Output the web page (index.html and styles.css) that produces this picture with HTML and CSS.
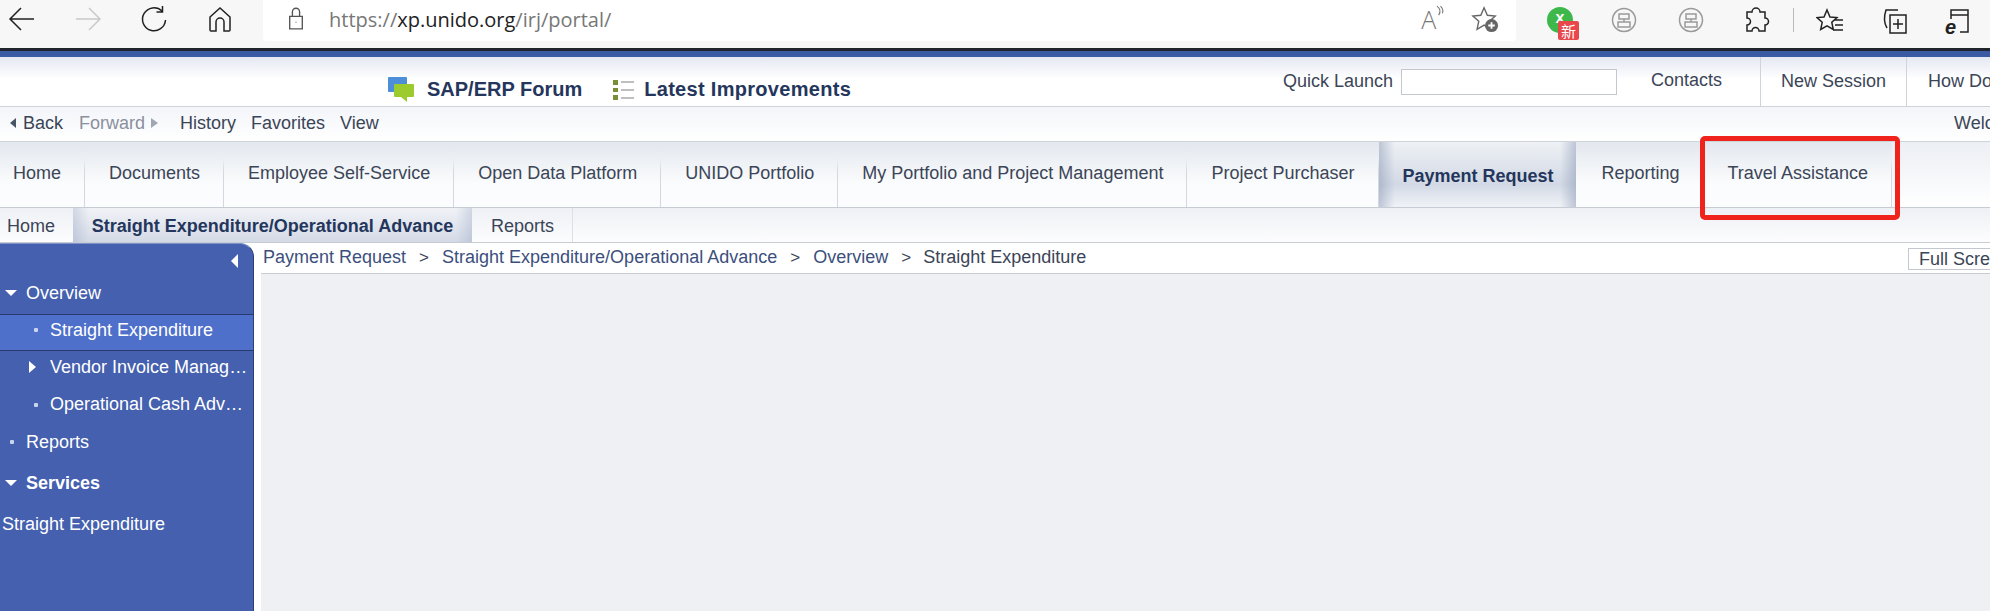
FILE: index.html
```html
<!DOCTYPE html>
<html>
<head>
    <title>Payment Request</title>
    <link rel="stylesheet" href="styles.css">
</head>
<body>
    <div class="browser">
        <div class="nav-icons">
            <svg class="tool" viewBox="0 0 28 28"><path d="M26 14H2M13 3 2 14l11 11"/></svg>
            <svg class="tool faded" viewBox="0 0 28 28"><path d="M2 14h24M15 3l11 11-11 11"/></svg>
            <svg class="tool" viewBox="0 0 28 28"><path d="M22 6A11.500 11.500 0 1 0 25.500 15M22.500 1v6h-6"/></svg>
            <svg class="tool" viewBox="0 0 28 28"><path d="M4 12 14 3l10 9v13a1 1 0 0 1-1 1h-5v-9a4 4 0 0 0-8 0v9H5a1 1 0 0 1-1-1z"/></svg>
        </div>
        <div class="address">
            <svg class="lock" viewBox="0 0 20 26"><path d="M3 10h14v14H3zM6 10V5a4 4 0 0 1 8 0v5M10 16v1"/></svg>
            <span class="url">https://<b>xp.unido.org</b>/irj/portal/</span>
            <span class="read">A<svg viewBox="0 0 10 14"><path d="M1 1c4 3 4 7 2 10M5 1c3 3 3 6 2 8"/></svg></span>
            <svg class="tool star" viewBox="0 0 30 30"><path d="M14 3l3.500 8 8.500.8-6.300 5.700 1.800 8.400L14 21.500 6.500 26l1.800-8.500L2 11.800l8.500-.8z"/><circle cx="22" cy="22" r="7" class="gray-dot"/><path class="plus" d="M22 18.500v7M18.500 22h7"/></svg>
        </div>
        <div class="ext-icons">
            <span class="ext-x">x<span class="ext-badge">新</span></span>
            <svg class="ext-round" viewBox="0 0 26 26"><circle cx="13" cy="13" r="11.500"/><path d="M8 7h10v5H8zM7 15h12v5H7zM13 12v3"/></svg>
            <svg class="ext-round" viewBox="0 0 26 26"><circle cx="13" cy="13" r="11.500"/><path d="M8 7h10v5H8zM7 15h12v5H7zM13 12v3"/></svg>
            <svg class="tool puzzle" viewBox="0 0 28 28"><path d="M10 5a4 4 0 0 1 8 0h5v6a3.500 3.500 0 0 1 0 7v6h-6a3.500 3.500 0 0 0-7 0H5v-6a3.500 3.500 0 0 0 0-7V5z"/></svg>
            <span class="tool-divider"></span>
            <svg class="tool fav" viewBox="0 0 28 28"><path d="M11 3l3 7 7 .6-5.200 4.700 1.500 7.200L11 18.800l-6.300 3.700 1.500-7.200L1 10.600 8 10zM18 13h9M19 18h8M17 23h10"/></svg>
            <svg class="tool coll" viewBox="0 0 28 28"><path d="M6 21C3 16 3 9 5 3h12M9 8h16v18H9zM17 12v10M12 17h10"/></svg>
            <span class="ie"><svg class="tool" viewBox="0 0 28 28"><path d="M6 12V3h17v22H15M6 8h17"/></svg><i>e</i></span>
        </div>
    </div>
    <div class="top-rule"></div>

    <div class="portal-header">
        <div class="forum">
            <svg class="chat" viewBox="0 0 26 25"><rect x="0" y="0" width="19" height="15" rx="1" fill="#4c8fd8"/><rect x="6" y="7" width="20" height="13" rx="1" fill="#9ccb2d"/><path d="M13 20h6v5z" fill="#9ccb2d"/></svg>
            <span class="forum-link">SAP/ERP Forum</span>
            <svg class="list" viewBox="0 0 21 22"><path class="list-dot" d="M0 1h5v5H0zM0 9h5v4H0zM0 16h5v5H0z"/><path class="list-line" d="M8 3h13M8 11h13M8 19h13"/></svg>
            <span class="forum-link latest">Latest Improvements</span>
        </div>
        <div class="quick">
            <label>Quick Launch</label>
            <input type="text" class="quick-input">
        </div>
        <a class="head-link contacts">Contacts</a>
        <a class="head-link session">New Session</a>
        <a class="head-link how">How Do</a>
    </div>

    <div class="history-bar">
        <span class="arrow-left"></span><span class="back">Back</span>
        <span class="forward">Forward</span><span class="arrow-right"></span>
        <span class="hist first">History</span>
        <span class="hist">Favorites</span>
        <span class="hist">View</span>
        <span class="welcome">Welc</span>
    </div>

    <div class="tabs">
        <div class="tab tab-first">Home</div>
        <div class="tab">Documents</div>
        <div class="tab">Employee Self-Service</div>
        <div class="tab">Open Data Platform</div>
        <div class="tab">UNIDO Portfolio</div>
        <div class="tab">My Portfolio and Project Management</div>
        <div class="tab tab-last">Project Purchaser</div>
        <div class="tab-active">Payment Request</div>
        <div class="tab tab-reporting">Reporting</div>
        <div class="tab tab-travel">Travel Assistance</div>
        <div class="highlight"></div>
    </div>

    <div class="subtabs">
        <div class="subtab sub-home">Home</div>
        <div class="subtab sub-active">Straight Expenditure/Operational Advance</div>
        <div class="subtab sub-reports">Reports</div>
    </div>

    <div class="main">
        <div class="sidebar">
            <div class="collapse"><span class="collapse-arrow"></span></div>
            <div class="item"><span class="tri-down"></span>Overview</div>
            <div class="item sub selected"><span class="dot"></span>Straight Expenditure</div>
            <div class="item sub"><span class="tri-right"></span><span class="clip">Vendor Invoice Management</span></div>
            <div class="item sub item-tight"><span class="dot"></span><span class="clip">Operational Cash Advance Request</span></div>
            <div class="item"><span class="dot"></span>Reports</div>
            <div class="item services"><span class="tri-down"></span>Services</div>
            <div class="service-link">Straight Expenditure</div>
        </div>
        <div class="content">
            <div class="crumbs">
                <a>Payment Request</a><span class="sep">&gt;</span>
                <a>Straight Expenditure/Operational Advance</a><span class="sep">&gt;</span>
                <a>Overview</a><span class="sep">&gt;</span>
                <span class="current">Straight Expenditure</span>
                <span class="full-screen">Full Screen</span>
            </div>
            <div class="page-area"></div>
        </div>
    </div>
</body>
</html>
```

FILE: styles.css
```css
body {
    margin: 0;
    width: 1990px;
    height: 611px;
    overflow: hidden;
    font-family: "Liberation Sans", Arial, sans-serif;
    font-size: 18px;
    color: #3b4557;
    background: #fff;
}
svg {
    display: block;
}

/* browser chrome */
.browser {
    display: flex;
    height: 48px;
    background: #f7f7f7;
    box-sizing: border-box;
}
.nav-icons {
    display: flex;
    gap: 38px;
    width: 263px;
    padding: 5px 0 0 8px;
    box-sizing: border-box;
}
.tool {
    width: 28px;
    height: 28px;
    flex: none;
    fill: none;
    stroke: #222;
    stroke-width: 1.500;
}
.faded {
    stroke: #c9c9c9;
}
.address {
    display: flex;
    align-items: center;
    width: 1253px;
    height: 41px;
    padding-bottom: 3px;
    box-sizing: border-box;
    background: #fff;
    border-radius: 0 0 4px 4px;
}
.lock {
    width: 18px;
    height: 24px;
    margin-left: 24px;
    fill: none;
    stroke: #555;
    stroke-width: 1.500;
}
.url {
    margin-left: 24px;
    font-family: "Open Sans", sans-serif;
    font-size: 20px;
    color: #777;
}
.url b {
    font-weight: 400;
    color: #222;
}
.read {
    display: flex;
    margin-left: 810px;
    font-family: "Open Sans", sans-serif;
    font-size: 25px;
    font-weight: 300;
    color: #777;
}
.read svg {
    width: 9px;
    height: 13px;
    margin-top: 3px;
    fill: none;
    stroke: #777;
    stroke-width: 1.200;
}
.star {
    margin-left: 26px;
    width: 28px;
    height: 28px;
    stroke: #666;
}
.gray-dot {
    fill: #666;
    stroke: none;
}
.plus {
    stroke: #fff;
    stroke-width: 2;
}
.ext-icons {
    display: flex;
    align-items: flex-start;
    padding-top: 7px;
}
.ext-x {
    position: relative;
    width: 26px;
    height: 26px;
    margin-left: 31px;
    border-radius: 50%;
    background: #3eb84a;
    color: #fff;
    font-weight: bold;
    font-size: 16px;
    line-height: 22px;
    text-align: center;
}
.ext-badge {
    position: absolute;
    left: 11px;
    top: 14px;
    width: 21px;
    height: 19px;
    background: #e8474c;
    border-radius: 2px;
    font-family: "Noto Sans CJK SC", sans-serif;
    font-size: 15px;
    font-weight: 400;
    line-height: 19px;
}
.ext-round {
    width: 26px;
    height: 26px;
    margin-left: 38px;
    fill: none;
    stroke: #9a9a9a;
    stroke-width: 1.500;
}
.ext-round + .ext-round {
    margin-left: 41px;
}
.puzzle {
    margin-left: 38px;
}
.tool-divider {
    width: 1px;
    height: 24px;
    margin: 1px 0 0 23px;
    background: #bbb;
}
.fav {
    margin-left: 22px;
}
.coll {
    margin-left: 37px;
}
.ie {
    position: relative;
    margin-left: 36px;
}
.ie i {
    position: absolute;
    left: 0;
    top: 9px;
    font-size: 20px;
    font-weight: bold;
    font-style: italic;
    color: #222;
}
.top-rule {
    height: 9px;
    background: #3a5aa4;
    border-top: 3px solid #20242c;
    box-sizing: border-box;
    box-shadow: 0 1px 0 #a9b5cf;
}

/* portal header */
.portal-header {
    display: flex;
    height: 50px;
    background: linear-gradient(#e4e8f2, #fff 45%);
    border-bottom: 1px solid #cfd3da;
    box-sizing: border-box;
}
.forum {
    display: flex;
    flex: none;
    align-items: center;
    width: 1283px;
    padding: 16px 0 0 388px;
    box-sizing: border-box;
}
.chat {
    width: 26px;
    height: 25px;
}
.forum-link {
    margin-left: 13px;
    font-size: 20px;
    font-weight: bold;
    color: #24365c;
    white-space: nowrap;
}
.latest {
    margin-left: 10px;
    letter-spacing: .3px;
}
.list {
    width: 21px;
    height: 22px;
    margin-left: 31px;
}
.list-dot {
    fill: #7a8f35;
}
.list-line {
    stroke: #aaa;
    stroke-width: 1.500;
}
.quick {
    display: flex;
    flex: none;
    align-items: flex-start;
    width: 341px;
    padding-top: 12px;
    box-sizing: border-box;
}
.quick label {
    width: 118px;
    line-height: 24px;
    white-space: nowrap;
}
.quick-input {
    width: 216px;
    height: 26px;
    padding: 0;
    border: 1px solid #c3c7cf;
    box-sizing: border-box;
    background: #fff;
}
.head-link {
    flex: none;
    padding: 12px 20px 0 20px;
    border-right: 1px solid #cfd3da;
    line-height: 24px;
    white-space: nowrap;
}
.contacts {
    padding: 11px 38px 0 27px;
}
.how {
    padding-left: 21px;
    border-right: none;
}

/* history row */
.history-bar {
    display: flex;
    align-items: center;
    height: 35px;
    padding: 0 0 2px 10px;
    background: linear-gradient(#f3f5f9, #fff);
    border-bottom: 1px solid #cfd3da;
    box-sizing: border-box;
}
.arrow-left, .arrow-right {
    width: 0;
    height: 0;
    border-top: 5px solid transparent;
    border-bottom: 5px solid transparent;
}
.arrow-left {
    border-right: 6px solid #4a5568;
}
.arrow-right {
    border-left: 7px solid #a0a6b2;
    margin-left: 6px;
}
.back {
    margin-left: 7px;
}
.forward {
    margin-left: 16px;
    color: #8a909c;
}
.hist {
    margin-left: 15px;
}
.hist.first {
    margin-left: 22px;
}
.welcome {
    position: absolute;
    left: 1954px;
}

/* main tabs */
.tabs {
    position: relative;
    display: flex;
    height: 66px;
    background: linear-gradient(#eceff4, #fff);
    border-bottom: 1px solid #c7cbd3;
    box-sizing: border-box;
}
.tab {
    padding: 21px 23px 0 24px;
    background: linear-gradient(#e3e7ee, #fbfcfd 65%);
    border-right: 1px solid #d5d8de;
    border-image: linear-gradient(transparent 25%, #d5d8de 45%) 1;
    white-space: nowrap;
}
.tab-first {
    padding-left: 13px;
}
.tab-last {
    padding-right: 24px;
}
.tab-active {
    width: 197px;
    padding-top: 24px;
    box-sizing: border-box;
    text-align: center;
    font-weight: bold;
    color: #24365c;
    background:
        linear-gradient(90deg, rgba(130, 145, 175, .45), transparent 8%, transparent 92%, rgba(130, 145, 175, .45)),
        linear-gradient(#eef1f5, #d2d9e5 65%, #f0f2f6);
}
.tab-reporting {
    padding-left: 25px;
    padding-right: 24px;
    border-right: none;
}
.tab-travel {
    padding-left: 24px;
}
.highlight {
    position: absolute;
    left: 1700px;
    top: -6px;
    width: 200px;
    height: 84px;
    border: 5px solid #f0231c;
    border-radius: 5px;
    box-sizing: border-box;
}

/* sub tabs */
.subtabs {
    display: flex;
    height: 35px;
    background: linear-gradient(#eef0f5, #fdfdfe);
    border-bottom: 1px solid #c7cbd3;
    box-sizing: border-box;
}
.subtab {
    padding-top: 8px;
    white-space: nowrap;
}
.sub-home {
    width: 73px;
    padding-left: 7px;
    box-sizing: border-box;
}
.sub-active {
    width: 399px;
    text-align: center;
    font-weight: bold;
    color: #24365c;
    box-sizing: border-box;
    background:
        linear-gradient(90deg, rgba(150, 165, 195, .35), transparent 4%, transparent 96%, rgba(150, 165, 195, .35)),
        linear-gradient(#f0f2f6, #d4dae6);
}
.sub-reports {
    padding: 8px 18px 0 19px;
    border-right: 1px solid #dcdfe5;
}

/* sidebar + content */
.main {
    display: flex;
    height: 369px;
}
.sidebar {
    width: 254px;
    flex: none;
    background: #4460ae;
    border-top: 1px solid #7f93c6;
    border-right: 1px solid #2d3f78;
    border-radius: 0 14px 0 0;
    box-sizing: border-box;
    color: #fff;
    overflow: hidden;
}
.collapse {
    display: flex;
    justify-content: flex-end;
    height: 30px;
    padding: 10px 15px 0 0;
    box-sizing: border-box;
}
.collapse-arrow {
    width: 0;
    height: 0;
    border-top: 7px solid transparent;
    border-bottom: 7px solid transparent;
    border-right: 7px solid #fff;
}
.item {
    display: flex;
    align-items: center;
    height: 38px;
    padding-left: 26px;
    position: relative;
    white-space: nowrap;
}
.item.sub {
    padding-left: 50px;
}
.item.item-tight {
    height: 37px;
}
.selected {
    height: 37px;
    padding-bottom: 5px;
    background: #4e6fca;
    border-top: 1px solid #28396f;
    border-bottom: 1px solid #28396f;
    box-sizing: border-box;
    margin: 2px 0 -3px;
}
.clip {
    display: block;
    width: 198px;
    overflow: hidden;
    text-overflow: ellipsis;
}
.dot {
    position: absolute;
    left: 10px;
    width: 4px;
    height: 4px;
    border-radius: 1px;
    background: #c9d3ec;
}
.sub .dot {
    left: 34px;
}
.selected .dot {
    top: 13px;
}
.tri-down {
    position: absolute;
    left: 5px;
    width: 0;
    height: 0;
    border-left: 6px solid transparent;
    border-right: 6px solid transparent;
    border-top: 6px solid #fff;
}
.tri-right {
    position: absolute;
    left: 29px;
    width: 0;
    height: 0;
    border-top: 6px solid transparent;
    border-bottom: 6px solid transparent;
    border-left: 7px solid #fff;
}
.services {
    height: 42px;
    font-weight: bold;
    margin-top: 1px;
}
.service-link {
    padding: 10px 0 0 2px;
}
.content {
    flex: 1;
    min-width: 0;
    padding-left: 7px;
    background: #fff;
}
.crumbs {
    position: relative;
    display: flex;
    align-items: center;
    height: 31px;
    padding: 0 0 1px 2px;
    border-bottom: 1px solid #c7cbd3;
    box-sizing: border-box;
    white-space: nowrap;
    color: #3b4557;
}
.crumbs a {
    color: #3c4f7d;
}
.sep {
    margin: 0 13px;
    font-size: 17px;
}
.current {
    margin-left: -1px;
}
.full-screen {
    position: absolute;
    left: 1647px;
    top: 5px;
    height: 22px;
    padding: 0 10px;
    border: 1px solid #c3c7cf;
    box-sizing: border-box;
    line-height: 20px;
}
.page-area {
    height: 338px;
    background: #eef0f4;
}
```
